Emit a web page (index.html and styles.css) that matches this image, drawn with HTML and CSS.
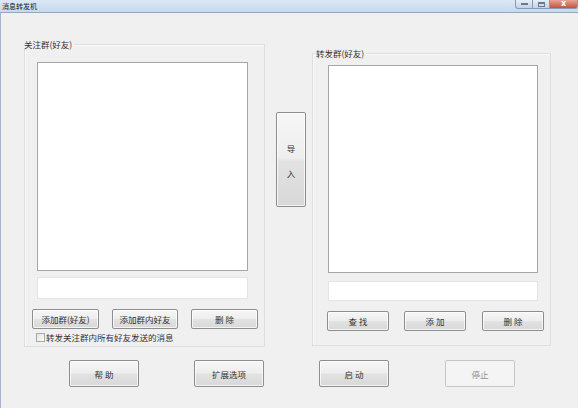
FILE: index.html
```html
<!DOCTYPE html>
<html lang="zh">
<head>
<meta charset="utf-8">
<title>消息转发机</title>
<link rel="stylesheet" href="styles.css">
</head>
<body>
<div class="window">
  <div class="titlebar">
    <span class="title">消息转发机</span>
    <div class="controls">
      <span class="ctl ctl-min"><span class="glyph-min"></span></span>
      <span class="ctl ctl-max"><span class="glyph-max"></span></span>
      <span class="ctl ctl-close">x</span>
    </div>
  </div>
  <div class="client">
    <div class="main">
      <div class="group group-left">
        <span class="group-title">关注群(好友)</span>
        <div class="listbox lb-left"></div>
        <div class="textbox tb-left"></div>
        <div class="btn-row row-left">
          <button class="btn b-l1">添加群(好友)</button>
          <button class="btn b-l2">添加群内好友</button>
          <button class="btn b-l3">删 除</button>
        </div>
        <label class="check-row">
          <span class="checkbox"></span>
          <span class="check-text">转发关注群内所有好友发送的消息</span>
        </label>
      </div>
      <button class="btn import-btn"><span>导</span><span>入</span></button>
      <div class="group group-right">
        <span class="group-title gt-right">转发群(好友)</span>
        <div class="listbox lb-right"></div>
        <div class="textbox tb-right"></div>
        <div class="btn-row row-right">
          <button class="btn b-r">查 找</button>
          <button class="btn b-r">添 加</button>
          <button class="btn b-r">删 除</button>
        </div>
      </div>
    </div>
    <div class="bottom-row">
      <button class="btn big">帮 助</button>
      <button class="btn big">扩展选项</button>
      <button class="btn big">启 动</button>
      <button class="btn big disabled" disabled>停止</button>
    </div>
  </div>
</div>
</body>
</html>
```

FILE: styles.css
```css
* { box-sizing: border-box; }
html, body { margin: 0; padding: 0; }
body {
  width: 578px;
  height: 408px;
  overflow: hidden;
  font-family: "Noto Sans CJK SC", "Noto Sans", "Liberation Sans", sans-serif;
  font-size: 8.5px;
  color: #333;
  background: #f0f0f0;
}
.window {
  width: 578px;
  height: 408px;
  display: flex;
  flex-direction: column;
  background: #f0f0f0;
}
.titlebar {
  height: 13px;
  flex: none;
  display: flex;
  justify-content: space-between;
  align-items: flex-start;
  background: linear-gradient(#dce8f6, #c6d9ee);
  border-bottom: 1px solid #93a7c0;
}
.title {
  font-size: 7px;
  line-height: 12px;
  padding-left: 2px;
  color: #222;
}
.controls {
  display: flex;
  height: 9px;
}
.ctl {
  height: 9px;
  display: flex;
  align-items: center;
  justify-content: center;
  border: 1px solid #8a99ad;
  border-top: none;
}
.ctl-min {
  width: 18px;
  border-radius: 0 0 0 3px;
  background: linear-gradient(#e6eef7, #c3d3e6);
}
.ctl-max {
  width: 17px;
  border-left: none;
  background: linear-gradient(#e6eef7, #c3d3e6);
}
.glyph-min {
  width: 7px;
  height: 2px;
  border: 1px solid #6a7a90;
  background: #fff;
}
.glyph-max {
  width: 7px;
  height: 5px;
  border: 1px solid #6a7a90;
  border-top-width: 2px;
}
.ctl-close {
  width: 28px;
  border-left: none;
  border-radius: 0 0 3px 0;
  background: linear-gradient(#e5a595, #c8513c);
  color: #fff;
  font-size: 8px;
  line-height: 8px;
  font-family: "DejaVu Sans", sans-serif;
  font-weight: bold;
}
.client {
  flex: 1;
  border-left: 1px solid #a2b6cd;
  padding: 31px 0 0 23px;
  display: flex;
  flex-direction: column;
}
.main {
  display: flex;
  align-items: flex-start;
}
.group {
  position: relative;
  border: 1px solid #dedede;
  box-shadow: inset 1px 1px 0 #fafafa;
  display: flex;
  flex-direction: column;
  align-items: flex-start;
}
.group-title {
  position: absolute;
  top: -6px;
  left: -1px;
  line-height: 10px;
  padding-right: 2px;
  background: #f0f0f0;
}
.gt-right { left: 3px; }
.group-left {
  width: 241px;
  height: 303px;
  padding: 17px 0 0 12px;
}
.group-right {
  width: 239px;
  height: 293px;
  margin-top: 9px;
  margin-left: 6px;
  padding: 11px 0 0 15px;
}
.listbox {
  background: #fff;
  border: 1px solid #a6a6a6;
}
.lb-left { width: 211px; height: 209px; }
.lb-right { width: 210px; height: 208px; }
.textbox {
  background: #fff;
  border: 1px solid #e4e4e4;
}
.tb-left { width: 211px; height: 22px; margin-top: 6px; }
.tb-right { width: 210px; height: 20px; margin-top: 8px; }
.btn-row {
  display: flex;
  margin-top: 10px;
}
.row-left { margin-left: -5px; gap: 13px; }
.row-right { margin-left: -1px; gap: 15px; }
.btn {
  font-family: inherit;
  font-size: 8.5px;
  color: #333;
  margin: 0;
  padding: 0;
  height: 20px;
  border: 1px solid #8e8e8e;
  border-radius: 2px;
  background: linear-gradient(#f6f6f6 0%, #eeeeee 48%, #e2e2e2 52%, #d8d8d8 100%);
  box-shadow: inset 0 0 0 1px rgba(255,255,255,0.7);
  display: flex;
  align-items: center;
  justify-content: center;
  line-height: 10px;
}
.b-l1 { width: 67px; }
.b-l2 { width: 66px; }
.b-l3 { width: 67px; }
.b-r { width: 62px; }
.b-r:nth-child(3) { margin-left: 1px; }
.check-row {
  display: flex;
  align-items: center;
  margin-top: 4px;
  margin-left: -1px;
  height: 9px;
}
.checkbox {
  width: 9px;
  height: 9px;
  border: 1px solid #a8a8a8;
  background: linear-gradient(135deg, #e4e4e4, #fbfbfb);
  margin-right: 1px;
}
.check-text { line-height: 9px; }
.import-btn {
  width: 30px;
  height: 95px;
  margin-top: 68px;
  margin-left: 11px;
  flex-direction: column;
  gap: 15px;
  padding-top: 1px;
}
.bottom-row {
  display: flex;
  gap: 55px;
  margin-top: 13px;
  margin-left: 45px;
}
.big {
  width: 70px;
  height: 27px;
}
.big:last-child { margin-left: 1px; }
.disabled {
  color: #909090;
  border-color: #c6c6c6;
  background: #f4f4f4;
  box-shadow: none;
}
```
